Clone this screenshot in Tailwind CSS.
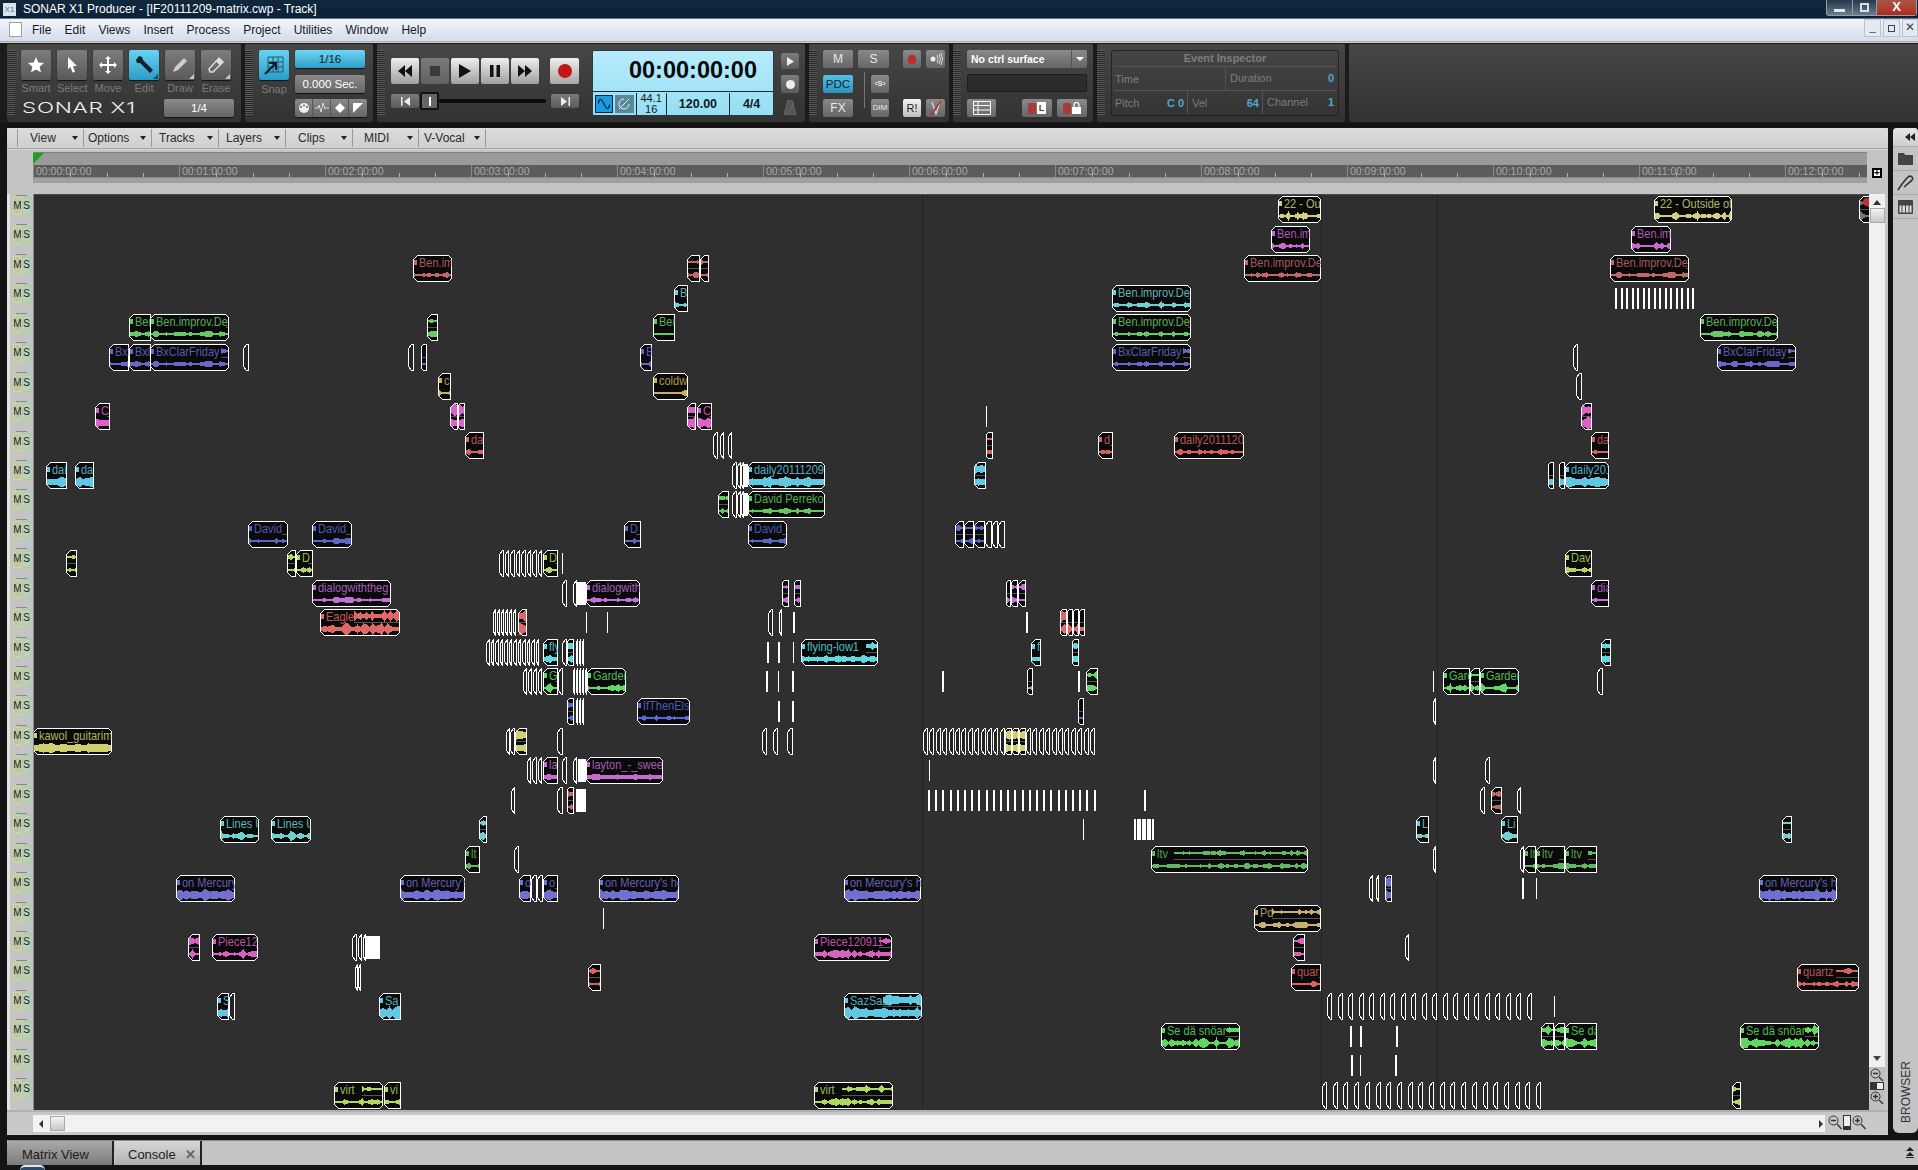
<!DOCTYPE html>
<html lang="en">
<head>
<meta charset="UTF-8">
<title>SONAR X1 Producer</title>
<script src="https://cdn.jsdelivr.net/npm/@tailwindcss/browser@4"></script>
</head>
<body class="bg-[#141414] font-['Liberation_Sans',Arial,sans-serif]">
<div class="w-[1918px] h-[1170px] overflow-hidden flex flex-col">

  <!-- title bar -->
  <div class="h-[18px] flex items-center bg-linear-to-b from-[#10273c] to-[#0a2238] text-white relative">
    <div class="w-[13px] h-[13px] ml-[3px] bg-[#d8e4ee] text-[#5a7a90] text-[8px] leading-[13px] text-center">X1</div>
    <span class="ml-[7px] text-[12px] leading-[18px]">SONAR X1 Producer - [IF20111209-matrix.cwp - Track]</span>
    <div class="absolute right-[1px] top-0 flex h-[16px] border border-t-0 border-[#8ea0b0] rounded-b-[3px]">
      <div class="w-[26px] bg-linear-to-b from-[#22384c] to-[#6e7c8a] border-r border-[#8ea0b0] flex items-end justify-center pb-[3px]"><div class="w-[11px] h-[3px] bg-[#e8e8e8]"></div></div>
      <div class="w-[24px] bg-linear-to-b from-[#22384c] to-[#6e7c8a] border-r border-[#8ea0b0] flex items-center justify-center"><div class="w-[9px] h-[9px] border-2 border-[#dde]"></div></div>
      <div class="w-[39px] bg-linear-to-b from-[#a8574a] to-[#b02818] text-white text-[13px] leading-[14px] font-bold text-center">X</div>
    </div>
  </div>
  <div class="h-[1px] bg-[#6a7a88]"></div>

  <!-- menu bar -->
  <div class="h-[21px] flex items-center bg-linear-to-b from-[#f2f6fb] to-[#d6dded] text-[#1a1a1a] text-[12px] relative">
    <div class="ml-[9px] w-[13px] h-[15px] bg-white border border-[#a0a0a0]"></div>
    <div class="ml-[10px] flex gap-[13.2px]">
      <span>File</span><span>Edit</span><span>Views</span><span>Insert</span><span>Process</span><span>Project</span><span>Utilities</span><span>Window</span><span>Help</span>
    </div>
    <div class="absolute right-0 top-0 flex gap-[2px] h-[18px]">
      <div class="w-[17px] bg-[#e4eaf4] border border-[#b8c4d4] text-[#444] text-[11px] leading-[14px] text-center">_</div>
      <div class="w-[17px] bg-[#e4eaf4] border border-[#b8c4d4] flex items-center justify-center"><div class="w-[7px] h-[7px] border border-[#444]"></div></div>
      <div class="w-[16px] bg-[#e4eaf4] border border-[#b8c4d4] text-[#444] text-[12px] leading-[15px] text-center">✕</div>
    </div>
  </div>
  <div class="h-[3px] bg-linear-to-b from-[#ffffff] via-[#a8a8a8] to-[#e8e8e8]"></div>

  <!-- control bar -->
  <div class="h-[80px] bg-[#1b1b1b] flex gap-[4px] pl-[7px] pt-[1px] text-[#7a7a7a]">

    <!-- tools -->
    <div class="w-[234px] h-[78px] bg-linear-to-b from-[#474747] to-[#323232] rounded-[2px] flex pt-[6px]">
      <div class="w-[8px] h-[65px] bg-[repeating-linear-gradient(#5a5a5a_0_1px,#262626_1px_2px)]"></div>
      <div class="ml-[6px]">
        <div class="flex gap-[6px]">
          <div class="w-[30px]">
            <div class="h-[30px] bg-linear-to-b from-[#7c7c7c] to-[#5a5a5a] rounded-[2px] shadow-[0_1px_1px_#111] flex items-center justify-center"><svg width="18" height="18" viewBox="0 0 18 18"><polygon points="9,1 11.3,6.5 17,7 12.6,10.7 14,16.5 9,13.4 4,16.5 5.4,10.7 1,7 6.7,6.5" fill="#fff"/></svg></div>
            <div class="mt-[2px] text-[11px] leading-[13px] text-center">Smart</div>
          </div>
          <div class="w-[30px]">
            <div class="h-[30px] bg-linear-to-b from-[#7c7c7c] to-[#5a5a5a] rounded-[2px] shadow-[0_1px_1px_#111] flex items-center justify-center"><svg width="18" height="18" viewBox="0 0 18 18"><polygon points="5,1 14,10 10,10 12,16 9.5,16.5 7.5,11 5,13" fill="#fff"/></svg></div>
            <div class="mt-[2px] text-[11px] leading-[13px] text-center">Select</div>
          </div>
          <div class="w-[30px]">
            <div class="h-[30px] bg-linear-to-b from-[#7c7c7c] to-[#5a5a5a] rounded-[2px] shadow-[0_1px_1px_#111] flex items-center justify-center"><svg width="20" height="20" viewBox="0 0 20 20"><path d="M10 1l3 3h-2v5h5V7l3 3-3 3v-2h-5v5h2l-3 3-3-3h2v-5H4v2l-3-3 3-3v2h5V4H7z" fill="#fff"/></svg></div>
            <div class="mt-[2px] text-[11px] leading-[13px] text-center">Move</div>
          </div>
          <div class="w-[30px]">
            <div class="h-[30px] bg-linear-to-b from-[#66d4f4] to-[#2a9cc4] rounded-[2px] shadow-[0_1px_1px_#111] flex items-center justify-center relative"><svg width="22" height="22" viewBox="0 0 22 22"><path d="M3 6l3-4 3 1 1 3 10 10-3 3L7 9 4 9z" fill="#10222c"/></svg><div class="absolute right-[1px] bottom-[1px] w-0 h-0 border-l-[5px] border-l-transparent border-b-[5px] border-b-[#1e4a5e]"></div></div>
            <div class="mt-[2px] text-[11px] leading-[13px] text-center">Edit</div>
          </div>
          <div class="w-[30px]">
            <div class="h-[30px] bg-linear-to-b from-[#7c7c7c] to-[#5a5a5a] rounded-[2px] shadow-[0_1px_1px_#111] flex items-center justify-center relative"><svg width="20" height="20" viewBox="0 0 20 20"><path d="M3 17l2-5L14 3l3 3-9 9z" fill="#cfcfcf"/></svg><div class="absolute right-[1px] bottom-[1px] w-0 h-0 border-l-[5px] border-l-transparent border-b-[5px] border-b-[#c8c8c8]"></div></div>
            <div class="mt-[2px] text-[11px] leading-[13px] text-center">Draw</div>
          </div>
          <div class="w-[30px]">
            <div class="h-[30px] bg-linear-to-b from-[#7c7c7c] to-[#5a5a5a] rounded-[2px] shadow-[0_1px_1px_#111] flex items-center justify-center relative"><svg width="20" height="20" viewBox="0 0 20 20"><path d="M3 14L13 3l4 4L7 17H4z" fill="none" stroke="#ddd" stroke-width="1.5"/><path d="M10 6.5l4 4 3-3.5-4-4z" fill="#ddd"/></svg><div class="absolute right-[1px] bottom-[1px] w-0 h-0 border-l-[5px] border-l-transparent border-b-[5px] border-b-[#c8c8c8]"></div></div>
            <div class="mt-[2px] text-[11px] leading-[13px] text-center">Erase</div>
          </div>
        </div>
        <div class="flex items-center mt-[4px]">
          <div class="w-[143px] ml-[1px] -mr-[1px] text-[#f2f2f2] text-[15px] leading-[18px] tracking-[.5px] font-['Inter'] font-light whitespace-nowrap origin-left scale-x-[1.5]">SONAR X1</div>
          <div class="w-[70px] h-[18px] bg-linear-to-b from-[#8a8a8a] to-[#666] rounded-[2px] shadow-[0_1px_1px_#111] text-white text-[11.5px] leading-[18px] text-center">1/4</div>
        </div>
      </div>
    </div>

    <!-- snap -->
    <div class="w-[128px] h-[78px] bg-linear-to-b from-[#474747] to-[#323232] rounded-[2px] flex pt-[6px]">
      <div class="w-[8px] h-[65px] bg-[repeating-linear-gradient(#5a5a5a_0_1px,#262626_1px_2px)]"></div>
      <div class="ml-[6px] w-[30px]">
        <div class="h-[30px] bg-linear-to-b from-[#66d4f4] to-[#2a9cc4] rounded-[2px] shadow-[0_1px_1px_#111] flex items-center justify-center"><svg width="22" height="22" viewBox="0 0 22 22"><path d="M5 3h15v15H5zM10 3v15M15 3v15M5 8h15M5 13h15" fill="none" stroke="#1c5a72" stroke-width="1"/><path d="M2 20l10-10M6 9h7v7" fill="none" stroke="#0a1c24" stroke-width="2"/></svg></div>
        <div class="mt-[3px] text-[11px] leading-[13px] text-center">Snap</div>
      </div>
      <div class="ml-[6px] w-[72px]">
        <div class="w-[70px] h-[18px] bg-linear-to-b from-[#6fd6f5] to-[#2c9ec6] rounded-[2px] shadow-[0_1px_1px_#111] text-[#10222c] text-[11.5px] leading-[18px] text-center">1/16</div>
        <div class="w-[70px] h-[18px] mt-[7px] bg-linear-to-b from-[#8a8a8a] to-[#666] rounded-[2px] shadow-[0_1px_1px_#111] text-white text-[11.5px] leading-[18px] text-center">0.000 Sec.</div>
        <div class="h-[18px] mt-[6px] flex bg-linear-to-b from-[#8a8a8a] to-[#666] rounded-[2px] shadow-[0_1px_1px_#111] divide-x divide-[#555] text-white">
          <div class="w-[18px] flex items-center justify-center"><svg width="12" height="12" viewBox="0 0 12 12"><circle cx="6" cy="6" r="5" fill="#eee"/><circle cx="3" cy="5" r="1" fill="#666"/><circle cx="6" cy="3.5" r="1" fill="#666"/><circle cx="9" cy="5" r="1" fill="#666"/></svg></div>
          <div class="w-[18px] flex items-center justify-center"><svg width="14" height="12" viewBox="0 0 14 12"><path d="M0 6h3l1-3 2 7 2-9 2 6 1-1h3" fill="none" stroke="#ddd"/></svg></div>
          <div class="w-[18px] flex items-center justify-center"><svg width="10" height="10" viewBox="0 0 10 10"><polygon points="5,0 10,5 5,10 0,5" fill="#fff"/></svg></div>
          <div class="w-[18px] flex items-center justify-center"><svg width="10" height="10" viewBox="0 0 10 10"><polygon points="0,0 10,0 0,10" fill="#fff"/></svg></div>
        </div>
      </div>
    </div>

    <!-- transport -->
    <div class="w-[428px] h-[78px] bg-linear-to-b from-[#474747] to-[#323232] rounded-[2px] flex pt-[6px]">
      <div class="w-[8px] h-[65px] bg-[repeating-linear-gradient(#5a5a5a_0_1px,#262626_1px_2px)]"></div>
      <div class="ml-[6px] w-[188px] pt-[8px]">
        <div class="flex gap-[2px] h-[26px]">
          <div class="w-[28px] bg-linear-to-b from-[#efefef] to-[#a0a0a0] rounded-[2px] flex items-center justify-center"><svg width="14" height="12" viewBox="0 0 14 12"><path d="M7 0v12L0 6zM14 0v12L7 6z" fill="#111"/></svg></div>
          <div class="w-[28px] bg-linear-to-b from-[#7a7a7a] to-[#626262] rounded-[2px] flex items-center justify-center"><div class="w-[10px] h-[10px] bg-[#3a3a3a]"></div></div>
          <div class="w-[28px] bg-linear-to-b from-[#efefef] to-[#a0a0a0] rounded-[2px] flex items-center justify-center"><svg width="12" height="14" viewBox="0 0 12 14"><path d="M0 0l12 7-12 7z" fill="#111"/></svg></div>
          <div class="w-[28px] bg-linear-to-b from-[#efefef] to-[#a0a0a0] rounded-[2px] flex items-center justify-center"><svg width="10" height="12" viewBox="0 0 10 12"><path d="M0 0h3.5v12H0zM6.5 0H10v12H6.5z" fill="#111"/></svg></div>
          <div class="w-[28px] bg-linear-to-b from-[#efefef] to-[#a0a0a0] rounded-[2px] flex items-center justify-center"><svg width="14" height="12" viewBox="0 0 14 12"><path d="M0 0v12l7-6zM7 0v12l7-6z" fill="#111"/></svg></div>
          <div class="ml-[9px] w-[29px] bg-linear-to-b from-[#efefef] to-[#a8a8a8] rounded-[2px] flex items-center justify-center"><div class="w-[14px] h-[14px] rounded-full bg-[#c01818]"></div></div>
        </div>
        <div class="flex items-center h-[18px] mt-[8px]">
          <div class="w-[28px] h-[14px] bg-linear-to-b from-[#7c7c7c] to-[#5a5a5a] rounded-[2px] flex items-center justify-center"><svg width="9" height="9" viewBox="0 0 9 9"><path d="M0 0h1.5v9H0zM9 0v9L3 4.5z" fill="#eee"/></svg></div>
          <div class="w-[19px] h-[18px] ml-[1px] border-2 border-[#111] bg-[#666] rounded-[2px] flex items-center justify-center"><div class="w-[2px] h-[9px] bg-white"></div></div>
          <div class="w-[107px] h-[4px] bg-[#0c0c0c] rounded-full"></div>
          <div class="ml-[5px] w-[28px] h-[14px] bg-linear-to-b from-[#7c7c7c] to-[#5a5a5a] rounded-[2px] flex items-center justify-center"><svg width="9" height="9" viewBox="0 0 9 9"><path d="M0 0v9l6-4.5zM7.5 0H9v9H7.5z" fill="#eee"/></svg></div>
        </div>
      </div>
      <div class="ml-[13px] w-[182px] h-[66px] bg-linear-to-b from-[#b6ecfb] to-[#96def4] border border-[#2a3a42] rounded-[2px] flex flex-col">
        <div class="h-[40px] text-[23.5px] leading-[39px] font-bold text-[#0a0a0a] text-right pr-[16px]">00:00:00:00</div>
        <div class="h-[1px] bg-[#1a2a30]"></div>
        <div class="flex-1 flex items-center text-[#101820]">
          <div class="ml-[2px] w-[18px] h-[18px] bg-[#1a9ce0] border border-[#123] flex items-center justify-center"><svg width="12" height="12" viewBox="0 0 12 12"><path d="M0 6c2-8 4-4 6 0s4 8 6 0" fill="none" stroke="#123" stroke-width="1.2"/></svg></div>
          <div class="ml-[2px] w-[19px] h-[18px] bg-[#5a8a9a] flex items-center justify-center"><svg width="14" height="14" viewBox="0 0 14 14"><path d="M2 12L12 2M7 2a5 5 0 1 0 5 5" fill="none" stroke="#dfefff"/></svg></div>
          <div class="w-[30px] h-[22px] border-l border-[#1a2a30] ml-[2px] text-[11px] leading-[11px] text-center">44.1<br>16</div>
          <div class="w-[64px] h-[22px] border-l border-[#1a2a30] text-[12.5px] leading-[22px] font-bold text-center">120.00</div>
          <div class="w-[44px] h-[22px] border-l border-[#1a2a30] text-[12.5px] leading-[22px] font-bold text-center">4/4</div>
        </div>
      </div>
      <div class="ml-[7px] w-[18px] flex flex-col items-center">
        <div class="w-[18px] h-[16px] mt-[3px] bg-linear-to-b from-[#7c7c7c] to-[#5a5a5a] rounded-[2px] flex items-center justify-center"><svg width="7" height="9" viewBox="0 0 7 9"><path d="M0 0l7 4.5L0 9z" fill="#eee"/></svg></div>
        <div class="w-[18px] h-[18px] mt-[6px] bg-linear-to-b from-[#7c7c7c] to-[#5a5a5a] rounded-[2px] flex items-center justify-center"><div class="w-[9px] h-[9px] rounded-full bg-[#eee]"></div></div>
        <svg class="mt-[7px]" width="14" height="15" viewBox="0 0 14 15"><path d="M5 0h4l4 15H1zM5 13L11 3" fill="#555" stroke="#6a6a6a"/></svg>
      </div>
    </div>

    <!-- mix -->
    <div class="w-[140px] h-[78px] bg-linear-to-b from-[#474747] to-[#323232] rounded-[2px] flex pt-[6px] text-[#e8e8e8] relative">
      <div class="w-[8px] h-[65px] bg-[repeating-linear-gradient(#5a5a5a_0_1px,#262626_1px_2px)]"></div>
      <div class="ml-[6px]">
        <div class="flex h-[18px]">
          <div class="w-[30px] bg-linear-to-b from-[#8a8a8a] to-[#666] rounded-[2px] text-[12px] leading-[18px] text-center">M</div>
          <div class="w-[31px] ml-[5px] bg-linear-to-b from-[#8a8a8a] to-[#666] rounded-[2px] text-[12px] leading-[18px] text-center">S</div>
          <div class="w-[18px] ml-[14px] bg-linear-to-b from-[#8a8a8a] to-[#666] rounded-[2px] flex items-center justify-center"><div class="w-[8px] h-[9px] rounded-full bg-[#c02a2a]"></div></div>
          <div class="w-[19px] ml-[5px] bg-linear-to-b from-[#8a8a8a] to-[#666] rounded-[2px] flex items-center justify-center"><svg width="14" height="12" viewBox="0 0 14 12"><circle cx="4" cy="6" r="2.5" fill="#eee"/><path d="M8 2q2 4 0 8M10 1q3 5 0 10M12 0q3 6 0 12" fill="none" stroke="#ddd"/></svg></div>
        </div>
        <div class="flex h-[18px] mt-[7px]">
          <div class="w-[30px] bg-linear-to-b from-[#56c0e4] to-[#2a94bc] rounded-[2px] text-[#0c2430] text-[11.5px] leading-[18px] text-center">PDC</div>
          <div class="w-[18px] ml-[18px] bg-linear-to-b from-[#8a8a8a] to-[#666] rounded-[2px] text-[8px] leading-[18px] text-center font-bold">‹S›</div>
        </div>
        <div class="flex h-[18px] mt-[6px]">
          <div class="w-[30px] bg-linear-to-b from-[#8a8a8a] to-[#666] rounded-[2px] text-[12px] leading-[18px] text-center">FX</div>
          <div class="w-[18px] ml-[18px] bg-linear-to-b from-[#8a8a8a] to-[#666] rounded-[2px] text-[8px] leading-[18px] text-center">DIM</div>
          <div class="w-[18px] ml-[14px] bg-linear-to-b from-[#f4f4f4] to-[#c0c0c0] rounded-[2px] text-[#222] text-[11px] leading-[18px] text-center">R!</div>
          <div class="w-[19px] ml-[5px] bg-linear-to-b from-[#8a8a8a] to-[#666] rounded-[2px] flex items-center justify-center"><svg width="14" height="16" viewBox="0 0 14 16"><path d="M3 2l4 12 4-12" fill="none" stroke="#ddd" stroke-width="1.2"/><path d="M2 15L12 1" stroke="#c02a2a" stroke-width="1.5"/></svg></div>
        </div>
      </div>
      <div class="absolute left-[55px] top-[28px] w-[4px] h-[36px] border-l border-[#777]"></div>
    </div>

    <!-- control surface -->
    <div class="w-[140px] h-[78px] bg-linear-to-b from-[#474747] to-[#323232] rounded-[2px] flex pt-[6px]">
      <div class="w-[8px] h-[65px] bg-[repeating-linear-gradient(#5a5a5a_0_1px,#262626_1px_2px)]"></div>
      <div class="ml-[6px] w-[120px]">
        <div class="h-[18px] flex bg-linear-to-b from-[#8a8a8a] to-[#666] rounded-[2px]">
          <div class="w-[104px] pl-[4px] text-white text-[10.5px] leading-[18px] font-bold">No ctrl surface</div>
          <div class="flex-1 border-l border-[#555] flex items-center justify-center"><div class="w-0 h-0 border-x-[4px] border-x-transparent border-t-[4px] border-t-white"></div></div>
        </div>
        <div class="h-[18px] mt-[6px] bg-[#2c2c2c] border border-[#1c1c1c] rounded-[2px]"></div>
        <div class="flex h-[18px] mt-[7px]">
          <div class="w-[30px] bg-linear-to-b from-[#8a8a8a] to-[#666] rounded-[2px] flex items-center justify-center"><svg width="18" height="14" viewBox="0 0 18 14"><path d="M.5.5h17v13H.5zM5 .5v13M.5 4.5h17M.5 9h17" fill="none" stroke="#fff"/></svg></div>
          <div class="w-[30px] ml-[26px] bg-linear-to-b from-[#8a8a8a] to-[#666] rounded-[2px] flex items-center justify-center gap-[1px]"><div class="w-[8px] h-[11px] bg-[#a83a3a] rounded-[2px]"></div><div class="w-[9px] h-[12px] bg-white text-[#444] text-[9px] leading-[12px] font-bold text-center">L</div></div>
          <div class="w-[31px] ml-[5px] bg-linear-to-b from-[#8a8a8a] to-[#666] rounded-[2px] flex items-center justify-center gap-[1px]"><div class="w-[8px] h-[11px] bg-[#a83a3a] rounded-[2px]"></div><svg width="9" height="12" viewBox="0 0 9 12"><path d="M2 5V3a2.5 2.5 0 0 1 5 0v2" fill="none" stroke="#fff" stroke-width="1.2"/><rect y="5" width="9" height="7" fill="#fff"/></svg></div>
        </div>
      </div>
    </div>

    <!-- event inspector -->
    <div class="w-[248px] h-[78px] bg-linear-to-b from-[#474747] to-[#323232] rounded-[2px] flex pt-[6px] text-[#7d7d7d] text-[11px]">
      <div class="w-[8px] h-[65px] bg-[repeating-linear-gradient(#5a5a5a_0_1px,#262626_1px_2px)]"></div>
      <div class="ml-[6px] w-[228px] h-[66px] border border-[#222] rounded-[3px]">
        <div class="h-[16px] border-b border-[#555] text-center font-bold leading-[15px] mx-[2px]">Event Inspector</div>
        <div class="h-[24px] border-b border-[#555] mx-[2px] flex items-center leading-[25px]">
          <div class="w-[112px] h-full border-r border-[#555] pl-[1px]">Time</div>
          <div class="flex-1 pl-[4px] pr-[2px] flex justify-between"><span>Duration</span><span class="text-[#4ea8cc] font-bold">0</span></div>
        </div>
        <div class="h-[23px] mx-[2px] flex items-center leading-[25px]">
          <div class="w-[74px] h-full border-r border-[#555] pl-[1px] pr-[3px] flex justify-between"><span>Pitch</span><span class="text-[#4ea8cc] font-bold">C 0</span></div>
          <div class="w-[75px] h-full border-r border-[#555] pl-[4px] pr-[3px] flex justify-between"><span>Vel</span><span class="text-[#4ea8cc] font-bold">64</span></div>
          <div class="flex-1 pl-[4px] pr-[2px] flex justify-between"><span>Channel</span><span class="text-[#4ea8cc] font-bold">1</span></div>
        </div>
      </div>
    </div>

    <div class="flex-1 h-[78px] bg-linear-to-b from-[#474747] to-[#323232] rounded-l-[2px]"></div>
  </div>
  <div class="h-[5px] bg-[#141414]"></div>

  <!-- main -->
  <div class="h-[1007px] flex bg-[#141414]">
    <div class="ml-[7px] w-[1881px] flex flex-col bg-[#c4c4c4]">
      <!-- view menu -->
      <div class="h-[20px] flex items-center bg-linear-to-b from-[#dcdcdc] to-[#cfcfcf] rounded-t-[3px] text-[12px] text-[#2a2a2a] pl-[10px]">
        <div class="w-[66px] h-[18px] border-l border-[#999] pl-[12px] pr-[5px] flex items-center justify-between"><span>View</span><span class="w-0 h-0 border-x-[3px] border-x-transparent border-t-[4px] border-t-[#222]"></span></div>
        <div class="w-[68px] h-[18px] border-l border-[#999] pl-[4px] pr-[5px] flex items-center justify-between"><span>Options</span><span class="w-0 h-0 border-x-[3px] border-x-transparent border-t-[4px] border-t-[#222]"></span></div>
        <div class="w-[67px] h-[18px] border-l border-[#999] pl-[7px] pr-[5px] flex items-center justify-between"><span>Tracks</span><span class="w-0 h-0 border-x-[3px] border-x-transparent border-t-[4px] border-t-[#222]"></span></div>
        <div class="w-[67px] h-[18px] border-l border-[#999] pl-[7px] pr-[5px] flex items-center justify-between"><span>Layers</span><span class="w-0 h-0 border-x-[3px] border-x-transparent border-t-[4px] border-t-[#222]"></span></div>
        <div class="w-[67px] h-[18px] border-l border-[#999] pl-[12px] pr-[5px] flex items-center justify-between"><span>Clips</span><span class="w-0 h-0 border-x-[3px] border-x-transparent border-t-[4px] border-t-[#222]"></span></div>
        <div class="w-[66px] h-[18px] border-l border-[#999] pl-[11px] pr-[5px] flex items-center justify-between"><span>MIDI</span><span class="w-0 h-0 border-x-[3px] border-x-transparent border-t-[4px] border-t-[#222]"></span></div>
        <div class="w-[68px] h-[18px] border-x border-[#999] pl-[5px] pr-[5px] flex items-center justify-between"><span>V-Vocal</span><span class="w-0 h-0 border-x-[3px] border-x-transparent border-t-[4px] border-t-[#222]"></span></div>
      </div>
      <div class="h-[2px] bg-linear-to-b from-[#8c8c8c] to-[#efefef]"></div>

      <!-- time ruler -->
      <div class="h-[44px] flex pt-[2px]">
        <div class="w-[26px]"></div>
        <div class="w-[1834px] h-[31px] flex flex-col bg-[#9a9a9a] border-t border-[#808080]">
          <div class="h-[12px] relative"><div class="absolute left-0 top-0 w-0 h-0 border-r-[11px] border-r-transparent border-t-[11px] border-t-[#1e9e1e]"></div></div>
          <div id="ruler" class="h-[12px] flex bg-[#5c5c5c] overflow-hidden"></div>
          <div class="flex-1 bg-[#a0a0a0] border-t border-[#8a8a8a]"></div>
        </div>
        <div class="ml-[5px] mt-[16px] w-[10px] h-[10px] bg-white border-2 border-black text-black text-[10px] leading-[6px] font-bold text-center">+</div>
      </div>

      <!-- tracks and canvas -->
      <div class="h-[916px] flex">
        <div class="w-[27px] bg-[#c4c4c4] border-l-[3px] border-l-[#e4e4e4] border-r border-r-[#8a8a8a]">
          <div id="headers" class="pt-[3px]"></div>
        </div>
        <div id="canvas" class="w-[1835px] relative overflow-hidden bg-[#2f2f2f] border-t border-[#4a4a4a]"></div>
        <div class="w-[16px] flex flex-col">
          <div class="h-[873px] bg-[#f0f0f0] flex flex-col items-center">
            <div class="mt-[6px] w-0 h-0 border-x-[4px] border-x-transparent border-b-[5px] border-b-[#333]"></div>
            <div class="mt-[3px] w-[15px] h-[15px] bg-linear-to-b from-[#f4f4f4] to-[#c8c8c8] border border-[#aaa]"></div>
            <div class="mt-auto mb-[6px] w-0 h-0 border-x-[4px] border-x-transparent border-t-[5px] border-t-[#444]"></div>
          </div>
          <div class="flex-1 bg-[#c0c0c0] flex flex-col items-center pt-[1px]">
            <svg width="14" height="13" viewBox="0 0 14 13"><circle cx="5.5" cy="5.5" r="4.5" fill="none" stroke="#333"/><path d="M3 5.5h5M9 9l4 4" stroke="#333" stroke-width="1.3"/></svg>
            <div class="w-[14px] h-[8px] my-[1px] border border-[#333] bg-linear-to-r from-[#333] from-50% to-[#eee] to-50%"></div>
            <svg width="14" height="13" viewBox="0 0 14 13"><circle cx="5.5" cy="5.5" r="4.5" fill="none" stroke="#333"/><path d="M3 5.5h5M5.5 3v5M9 9l4 4" stroke="#333" stroke-width="1.3"/></svg>
          </div>
        </div>
        <div class="flex-1 bg-[#c4c4c4]"></div>
      </div>

      <!-- horizontal scroll -->
      <div class="h-[25px] bg-[#c8c8c8] border-t-[2px] border-[#b0b0b0] flex items-start pt-[3px]">
        <div class="ml-[26px] w-[1792px] h-[17px] bg-[#f2f2f2] flex items-center">
          <div class="ml-[6px] w-0 h-0 border-y-[4px] border-y-transparent border-r-[4px] border-r-[#333]"></div>
          <div class="ml-[7px] w-[15px] h-[15px] bg-linear-to-b from-[#f4f4f4] to-[#c8c8c8] border border-[#aaa]"></div>
          <div class="ml-auto mr-[2px] w-0 h-0 border-y-[4px] border-y-transparent border-l-[4px] border-l-[#333]"></div>
        </div>
        <div class="ml-[3px] flex items-center gap-[1px]">
          <svg width="14" height="15" viewBox="0 0 14 15"><circle cx="5.5" cy="5.5" r="4.5" fill="none" stroke="#333"/><path d="M3 5.5h5M9 9l4.5 5" stroke="#333" stroke-width="1.3"/></svg>
          <div class="w-[8px] h-[15px] border border-[#333] bg-linear-to-b from-[#eee] from-75% to-[#333] to-75%"></div>
          <svg width="14" height="15" viewBox="0 0 14 15"><circle cx="5.5" cy="5.5" r="4.5" fill="none" stroke="#333"/><path d="M3 5.5h5M5.5 3v5M9 9l4.5 5" stroke="#333" stroke-width="1.3"/></svg>
        </div>
      </div>
    </div>

    <!-- browser strip -->
    <div class="ml-[5px] w-[25px] h-[1005px] bg-[#c4c4c4] rounded-t-[4px] rounded-b-[6px] flex flex-col items-center">
      <div class="h-[18px] w-full bg-linear-to-b from-[#e4e4e4] to-[#cfcfcf] rounded-t-[4px] flex items-center justify-end pr-[3px]"><svg width="10" height="8" viewBox="0 0 10 8"><path d="M5 0v8L0 4zM10 0v8L5 4z" fill="#222"/></svg></div>
      <div class="h-[25px] w-full border-y border-[#aaa] flex items-center justify-center"><svg width="15" height="13" viewBox="0 0 15 13"><path d="M0 1h6l1 2h8v10H0z" fill="#444"/></svg></div>
      <div class="h-[24px] w-full border-b border-[#aaa] flex items-center justify-center"><svg width="17" height="16" viewBox="0 0 17 16"><path d="M1 15l4-6 5-6q3-3 5-1t-2 5l-6 5" fill="none" stroke="#333" stroke-width="1.6"/></svg></div>
      <div class="h-[24px] w-full border-b border-[#aaa] flex items-center justify-center"><svg width="15" height="14" viewBox="0 0 15 14"><rect width="15" height="14" rx="1" fill="#444"/><path d="M1 5h13v8H1zM4 5v8M7.5 5v8M11 5v8" fill="#ddd" stroke="#444"/></svg></div>
      <div class="mt-auto mb-[10px] h-[62px] text-[#333] text-[12px] [writing-mode:vertical-rl] rotate-180">BROWSER</div>
    </div>
  </div>

  <div class="h-[5px] bg-[#141414]"></div>

  <!-- tab row -->
  <div class="h-[25px] ml-[7px] flex bg-[#c4c4c4] border-t border-[#8a8a8a] text-[13px] text-[#1c1c1c]">
    <div class="w-[107px] bg-linear-to-b from-[#aaa] to-[#7c7c7c] rounded-tl-[4px] border-r-2 border-[#222] pl-[15px] leading-[27px]">Matrix View</div>
    <div class="ml-[1px] w-[87px] bg-linear-to-b from-[#d8d8d8] to-[#b0b0b0] border-r-2 border-[#222] pl-[13px] flex justify-between leading-[27px] pr-[4px]"><span>Console</span><span class="text-[#666] font-bold">✕</span></div>
    <div class="ml-auto mr-[3px] mt-[6px]"><svg width="10" height="11" viewBox="0 0 10 11"><path d="M5 0l4 4H1zM5 5l4 4H1zM1 10h8v1H1z" fill="#222"/></svg></div>
  </div>
  <div class="h-[5px] bg-[#141414] pl-[20px]"><div class="w-[25px] h-[10px] rounded-full border-t-2 border-[#dfe8f0] bg-[#2a4a66]"></div></div>
</div>

<script>
  // time ruler, one block per minute
  const ruler = document.getElementById('ruler');
  for (let m = 0; m < 13; m++) {
    const b = document.createElement('div');
    b.className = 'w-[146px] shrink-0 relative border-l border-[#8a8a8a] text-[#a8a8a8] text-[10.5px] leading-[12px] pl-[2px] whitespace-nowrap';
    b.textContent = '00:' + String(m).padStart(2, '0') + ':00:00';
    [36, 73, 109].forEach(p => {
      const t = document.createElement('div');
      t.className = 'absolute bottom-0 w-[1px] h-[4px] bg-[#b4b4b4]';
      t.style.left = p + 'px';
      b.appendChild(t);
    });
    ruler.appendChild(b);
  }

  // M / S buttons for each track
  const headers = document.getElementById('headers');
  for (let i = 0; i < 31; i++) {
    const r = document.createElement('div');
    r.className = 'h-[29.45px] flex pl-[3px] text-[10px] leading-[16px] text-[#222] relative';
    r.innerHTML = '<div class="w-[9px] h-[18px] bg-[#c4c4ae] border border-[#c8e28c] flex justify-center">M</div>' +
      '<div class="w-[9px] h-[18px] bg-[#c0ccc0] border border-[#9ad89a] flex justify-center">S</div>' +
      '<div class="absolute left-[6px] -top-[2px] w-[11px] h-[1px] bg-[#8a8a8a]"></div>';
    headers.appendChild(r);
  }

  // track colours and waveform size [min, max]
  const colors = ['#d0d080','#c868d0','#c06868','#70d0d0','#68c868','#6868c8','#c8b060','#e060c8','#d86060','#60c8e0','#60c860','#5868c8','#b0d860','#c070d8','#e06868','#60d8e0','#60d868','#5868d8','#d0d070','#c868d0','#c06868','#70d0d0','#60b860','#7070d0','#c8b070','#d860c0','#d86060','#60c8e0','#60d860','#888888','#b0d860'];
  const amps = {0:[1,5],1:[1,4],3:[1,4],7:[3,7],9:[2.5,6],14:[2,7],15:[2,4],18:[3,5],19:[2,3],21:[1,5],23:[3,6],25:[1.2,5],27:[2.5,7],28:[1,6],30:[1,4.5],16:[.75,5]};

  const canvas = document.getElementById('canvas');
  const rowTop = r => 195 + r * 29.53 - 194;

  // smoothed noise, drawn as one-pixel columns
  function wave(x0, x1, cy, row, seed) {
    const [lo, hi] = amps[row] || [.75, 3.5];
    let s = seed * 7 + 13, d = '';
    const next = () => (s = (s * 137 + 71) % 1009) / 1009;
    let a0 = next(), a1 = next();
    for (let x = x0; x < x1; x++) {
      const k = (x - x0) % 3;
      if (k === 0) { a0 = a1; a1 = next(); }
      const n = a0 + (a1 - a0) * k / 3;
      const a = lo + n * n * (hi - lo);
      d += 'M' + x + '.5 ' + Math.round(cy - a) + 'V' + Math.round(cy + a);
    }
    return d;
  }

  // c: audio clip, label may be empty
  function clip(row, x0, x1, label, tint) {
    const w = x1 - x0, color = tint || colors[row], h = 27;
    const c = w > 7 ? 4 : 2;
    const rc = w > 34 ? 3 : 0;
    const outline = `M${c}.5 .5H${w - 0.5 - rc}L${w - 0.5} ${rc + 0.5}V${h - 0.5 - rc}L${w - 0.5 - rc} ${h - 0.5}H${c}.5L.5 ${h - 0.5 - c}V${c}.5Z`;
    let top = '';
    const used = label ? Math.round(label.length * 5.3) + 7 : 0;
    if (used + 6 < w) top = wave(used || 1, w - 1, 7, row, x0 + 3);
    const bottom = wave(1, w - 1, 20, row, x0);
    const d = document.createElement('div');
    d.className = 'absolute h-[27px] overflow-hidden';
    d.style.left = (x0 - 34) + 'px';
    d.style.top = rowTop(row) + 'px';
    d.style.width = w + 'px';
    d.innerHTML = `<svg class="block" width="${w}" height="27" shape-rendering="crispEdges"><path d="${outline}" fill="#0a0a0a" stroke="none"/><path d="M${used || 1} 13.5H${w - 1}" stroke="#555"/><path d="${top}${bottom}" stroke="${color}"/>` +
      (label ? `<rect x="1" y="5" width="3" height="5" fill="${color}"/>` : '') +
      `<path d="${outline}" fill="none" stroke="#fff"/></svg>` +
      (label ? `<span class="absolute left-[6px] top-[2px] text-[11px] leading-[11px] whitespace-nowrap origin-top-left scale-y-[1.1] opacity-85" style="color:${color}">${label}</span>` : '');
    canvas.appendChild(d);
  }

  // e: empty clip, white outline only
  function empty(row, x0, x1) {
    const w = x1 - x0, h = 27, c = Math.min(3, w - 1);
    const d = document.createElement('div');
    d.className = 'absolute h-[27px]';
    d.style.left = (x0 - 34) + 'px';
    d.style.top = rowTop(row) + 'px';
    d.style.width = w + 'px';
    d.innerHTML = `<svg class="block" width="${w}" height="27" shape-rendering="crispEdges"><path d="M${w - 0.5} .5V${h - 0.5}H${c}.5L.5 ${h - 4.5}V4.5L${c}.5 .5Z" fill="#242424" stroke="#fff"/></svg>`;
    canvas.appendChild(d);
  }

  // t: very short clip, just a white line
  function tick(row, x, wide) {
    const d = document.createElement('div');
    d.className = 'absolute bg-white h-[21px]';
    d.style.left = (x - 34) + 'px';
    d.style.top = (rowTop(row) + 3) + 'px';
    d.style.width = (wide || 1) + 'px';
    canvas.appendChild(d);
  }

  function fill(row, x0, x1) {
    const d = document.createElement('div');
    d.className = 'absolute bg-white h-[23px]';
    d.style.left = (x0 - 34) + 'px';
    d.style.top = (rowTop(row) + 2) + 'px';
    d.style.width = (x1 - x0) + 'px';
    canvas.appendChild(d);
  }

  // runs of empty clips packed together, w is the width of each one
  function run(row, x0, x1, pitch, w) {
    for (let x = x0; x + (w || pitch - 1) <= x1; x += pitch) empty(row, Math.round(x), Math.round(x + (w || pitch - 1)));
  }
  function ticks(row, x0, x1, pitch) {
    for (let x = x0; x <= x1; x += pitch) tick(row, Math.round(x), 2);
  }

  const clips = [
    [0,1278,1321,'22 - Ou'],[0,1654,1732,'22 - Outside of'],[0,1859,1875,'','#777777'],
    [1,1271,1310,'Ben.im'],[1,1631,1671,'Ben.im'],
    [2,413,452,'Ben.im'],[2,687,700,''],[2,700,709,''],[2,1244,1321,'Ben.improv.De'],[2,1610,1689,'Ben.improv.De'],
    [3,674,688,'B'],[3,1112,1191,'Ben.improv.De'],
    [4,129,151,'Ben'],[4,150,229,'Ben.improv.De'],[4,427,438,''],[4,653,675,'Ben'],[4,1112,1191,'Ben.improv.De'],[4,1700,1778,'Ben.improv.De'],
    [5,109,129,'Bxl'],[5,129,151,'Bxl'],[5,150,229,'BxClarFriday'],[5,421,427,''],[5,640,652,'B'],[5,1112,1191,'BxClarFriday'],[5,1717,1796,'BxClarFriday'],
    [6,438,451,'c'],[6,653,688,'coldw'],
    [7,95,110,'C'],[7,450,458,''],[7,458,465,''],[7,687,696,''],[7,697,712,'C'],[7,1581,1592,''],
    [8,465,484,'da'],[8,986,993,''],[8,1098,1113,'d'],[8,1174,1244,'daily2011120'],[8,1591,1609,'da'],
    [9,46,67,'dai'],[9,75,94,'da'],[9,748,825,'daily20111209'],[9,974,986,''],[9,1548,1554,''],[9,1559,1565,''],[9,1565,1609,'daily201'],
    [10,718,729,''],[10,748,825,'David Perreko-'],
    [11,248,288,'David'],[11,312,352,'David'],[11,624,641,'D'],[11,748,787,'David'],[11,955,964,''],[11,964,974,''],[11,974,985,''],
    [12,66,77,''],[12,287,296,''],[12,296,313,'D'],[12,543,558,'D'],[12,1565,1592,'Dav'],
    [13,312,391,'dialogwiththeg'],[13,586,640,'dialogwith'],[13,782,789,''],[13,794,801,''],[13,1006,1011,''],[13,1011,1018,''],[13,1018,1026,''],[13,1591,1609,'dia'],
    [14,320,400,'Eagle'],[14,518,527,''],[14,1060,1067,''],[14,1067,1073,''],[14,1073,1079,''],[14,1079,1085,''],
    [15,543,558,'fly'],[15,567,574,''],[15,801,878,'flying-low1'],[15,1031,1041,'f'],[15,1072,1079,''],[15,1601,1611,''],
    [16,543,558,'G'],[16,587,626,'Garden'],[16,1027,1033,''],[16,1086,1098,''],[16,1443,1470,'Gard'],[16,1470,1480,''],[16,1480,1519,'Garder'],
    [17,567,574,''],[17,637,690,'IfThenEls'],[17,1078,1084,''],
    [18,33,112,'kawol_guitarim'],[18,515,527,''],[18,1005,1012,''],[18,1012,1019,''],[18,1019,1026,''],
    [19,543,558,'la'],[19,586,663,'layton_-_sweet'],
    [20,567,574,''],[20,1491,1502,''],
    [21,220,259,'Lines U'],[21,271,311,'Lines U'],[21,479,487,''],[21,1416,1429,'L'],[21,1501,1518,'Li'],[21,1782,1792,''],
    [22,465,480,'lt'],[22,1151,1308,'ltv'],[22,1524,1536,'lt'],[22,1536,1565,'ltv'],[22,1565,1597,'ltv'],
    [23,176,235,'on Mercury'],[23,400,465,"on Mercury's"],[23,519,531,'o'],[23,543,558,'o'],[23,599,679,"on Mercury's he"],[23,844,921,"on Mercury's he"],[23,1385,1392,''],[23,1759,1837,"on Mercury's he"],
    [24,1254,1321,'Pd'],
    [25,188,200,''],[25,212,258,'Piece12'],[25,814,892,'Piece120911'],[25,1293,1305,''],
    [26,588,601,''],[26,1291,1321,'quar'],[26,1797,1859,'quartz'],
    [27,217,229,'S'],[27,379,401,'Sa'],[27,844,922,'SazSaz'],
    [28,1161,1240,'Se dä snöar'],[28,1541,1554,''],[28,1554,1565,''],[28,1565,1597,'Se dä'],[28,1740,1819,'Se dä snöar'],
    [30,334,383,'virt'],[30,384,401,'vi'],[30,814,893,'virt'],[30,1732,1741,'']
  ];

  const empties = [
    [5,243,249],[5,408,414],[5,1573,1578],[6,1576,1582],
    [8,713,718],[8,720,724],[8,728,732],
    [9,732,737],[9,737,741],[9,741,744],
    [10,732,737],[10,737,741],[10,741,744],
    [11,985,992],[11,992,998],[11,998,1005],
    [13,562,567],[13,573,577],
    [14,768,773],[14,779,782],
    [15,562,567],[16,558,563],[16,1597,1603],[18,506,510],[18,510,515],[18,557,563],[18,762,767],[18,773,778],[18,787,793],
    [19,562,567],[19,573,577],[19,1485,1490],[20,511,515],[20,557,563],[20,1480,1485],[20,1517,1521],
    [22,514,519],[22,1433,1436],[22,1520,1524],[17,1433,1436],[19,1433,1436],
    [23,531,537],[23,537,543],[23,1369,1373],[23,1376,1379],
    [25,352,357],[25,358,362],[25,363,366],[25,1405,1409],[26,355,358],[26,358,361],
    [27,229,235]
  ];

  empties.forEach(e => empty(...e));
  run(12, 499, 543, 5.5);
  run(14, 493, 518, 4);
  run(15, 486, 543, 4.5);
  run(16, 523, 543, 5);
  run(19, 527, 543, 5.3);
  run(18, 923, 1005, 6.4, 5);
  run(18, 1026, 1099, 6.4, 5);
  run(27, 1327, 1537, 10.5, 5);
  run(30, 1322, 1542, 10.7, 5);
  run(16, 573, 587, 3);
  run(15, 576, 586, 3);
  run(17, 576, 586, 3);
  ticks(3, 1615, 1697, 5.5);
  ticks(20, 928, 1099, 7.2);
  ticks(21, 1134, 1152, 2.5);

  fill(9, 744, 748); fill(10, 744, 748); fill(13, 577, 586); fill(19, 578, 586); fill(20, 576, 586); fill(25, 366, 380);

  clips.forEach(c => clip(...c));

  // stray marker on the clip that runs under the scrollbar
  const mark = document.createElement('div');
  mark.className = 'absolute w-[8px] h-[8px] rounded-full bg-[#c03030]';
  mark.style.left = (1863 - 34) + 'px';
  mark.style.top = '3px';
  canvas.appendChild(mark);

  [[7,986],[12,562],[14,586],[14,607],[14,793,2],[14,1026,2],[15,767,2],[15,778,2],[15,793],[16,766,2],[16,778],[16,792,2],[16,942,2],[16,1078,2],[16,1433],
   [17,778,2],[17,792,2],[19,929],[20,1144,2],[21,1083],[23,1522,2],[23,1536],[24,603],[27,1554],[28,1350,2],[28,1360,2],[28,1396,2],[29,1351,2],[29,1360],[29,1395,2]]
    .forEach(t => tick(...t));

  // region lines
  [922, 1321, 1437].forEach(x => {
    const l = document.createElement('div');
    l.className = 'absolute top-0 bottom-0 w-[1px] bg-[#232323]';
    l.style.left = (x - 34) + 'px';
    canvas.prepend(l);
  });
</script>
</body>
</html>
